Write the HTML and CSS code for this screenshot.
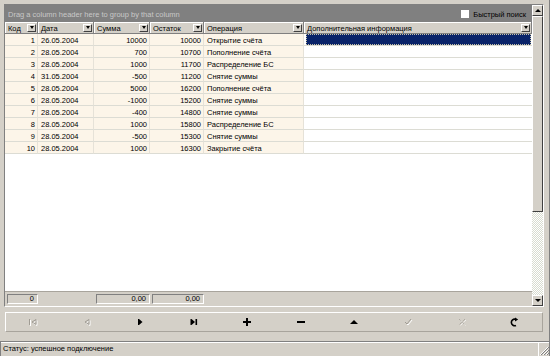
FILE: index.html
```html
<!DOCTYPE html>
<html lang="ru">
<head>
    <meta charset="utf-8">
    <title>Операции по счёту</title>
    <link rel="stylesheet" href="styles.css">
</head>
<body>
    <div class="window">
        <div class="grid-frame">
            <div class="grid-main">
                <div class="group-panel">
                    <span class="group-hint">Drag a column header here to group by that column</span>
                    <label class="quick-search"><span class="check"></span>Быстрый поиск</label>
                </div>
                <div class="grid-row grid-head">
                    <div class="hcell">Код<span class="drop"></span></div>
                    <div class="hcell">Дата<span class="drop"></span></div>
                    <div class="hcell">Сумма<span class="drop"></span></div>
                    <div class="hcell">Остаток<span class="drop"></span></div>
                    <div class="hcell">Операция<span class="drop"></span></div>
                    <div class="hcell hcell-last">Дополнительная информация<span class="drop"></span></div>
                </div>
                <div class="grid-body">
                    <div class="grid-row">
                        <div class="cell num">1</div><div class="cell">26.05.2004</div><div class="cell num">10000</div><div class="cell num">10000</div><div class="cell">Открытие счёта</div><div class="cell info"><span class="selected"></span></div>
                    </div>
                    <div class="grid-row">
                        <div class="cell num">2</div><div class="cell">28.05.2004</div><div class="cell num">700</div><div class="cell num">10700</div><div class="cell">Пополнение счёта</div><div class="cell info"></div>
                    </div>
                    <div class="grid-row">
                        <div class="cell num">3</div><div class="cell">28.05.2004</div><div class="cell num">1000</div><div class="cell num">11700</div><div class="cell">Распределение БС</div><div class="cell info"></div>
                    </div>
                    <div class="grid-row">
                        <div class="cell num">4</div><div class="cell">31.05.2004</div><div class="cell num">-500</div><div class="cell num">11200</div><div class="cell">Снятие суммы</div><div class="cell info"></div>
                    </div>
                    <div class="grid-row">
                        <div class="cell num">5</div><div class="cell">28.05.2004</div><div class="cell num">5000</div><div class="cell num">16200</div><div class="cell">Пополнение счёта</div><div class="cell info"></div>
                    </div>
                    <div class="grid-row">
                        <div class="cell num">6</div><div class="cell">28.05.2004</div><div class="cell num">-1000</div><div class="cell num">15200</div><div class="cell">Снятие суммы</div><div class="cell info"></div>
                    </div>
                    <div class="grid-row">
                        <div class="cell num">7</div><div class="cell">28.05.2004</div><div class="cell num">-400</div><div class="cell num">14800</div><div class="cell">Снятие суммы</div><div class="cell info"></div>
                    </div>
                    <div class="grid-row">
                        <div class="cell num">8</div><div class="cell">28.05.2004</div><div class="cell num">1000</div><div class="cell num">15800</div><div class="cell">Распределение БС</div><div class="cell info"></div>
                    </div>
                    <div class="grid-row">
                        <div class="cell num">9</div><div class="cell">28.05.2004</div><div class="cell num">-500</div><div class="cell num">15300</div><div class="cell">Снятие суммы</div><div class="cell info"></div>
                    </div>
                    <div class="grid-row">
                        <div class="cell num">10</div><div class="cell">28.05.2004</div><div class="cell num">1000</div><div class="cell num">16300</div><div class="cell">Закрытие счёта</div><div class="cell info"></div>
                    </div>
                </div>
                <div class="grid-row grid-footer">
                    <div class="fcell">0</div>
                    <div></div>
                    <div class="fcell">0,00</div>
                    <div class="fcell">0,00</div>
                    <div></div>
                    <div></div>
                </div>
            </div>
            <div class="vscroll">
                <div class="sbtn"><span class="arrow-up"></span></div>
                <div class="thumb"></div>
                <div class="track"></div>
                <div class="sbtn"><span class="arrow-down"></span></div>
            </div>
        </div>

        <div class="navigator">
            <div class="nav-btn">
                <svg width="10" height="10" viewBox="0 0 10 10">
                    <g transform="translate(1 1)" stroke="#fff" fill="none"><path d="M1.5 2v6"/><path d="M8 2.5v5L4 5z"/></g>
                    <g stroke="#a09c94" fill="none"><path d="M1.5 2v6"/><path d="M8 2.5v5L4 5z"/></g>
                </svg>
            </div>
            <div class="nav-btn">
                <svg width="10" height="10" viewBox="0 0 10 10">
                    <path d="M8 2.5v5L4 5z" transform="translate(1 1)" stroke="#fff" fill="none"/>
                    <path d="M8 2.5v5L4 5z" stroke="#a09c94" fill="none"/>
                </svg>
            </div>
            <div class="nav-btn">
                <svg width="10" height="10" viewBox="0 0 10 10"><path d="M3 2h1l3.5 3L4 8H3z" fill="#000"/></svg>
            </div>
            <div class="nav-btn">
                <svg width="10" height="10" viewBox="0 0 10 10"><path d="M1.5 2h1l3.5 3-3.5 3h-1z" fill="#000"/><rect x="6.5" y="2" width="1.6" height="6" fill="#000"/></svg>
            </div>
            <div class="nav-btn">
                <svg width="10" height="10" viewBox="0 0 10 10"><rect x="1" y="4" width="8" height="2" fill="#000"/><rect x="4" y="1" width="2" height="8" fill="#000"/></svg>
            </div>
            <div class="nav-btn">
                <svg width="10" height="10" viewBox="0 0 10 10"><rect x="1" y="4" width="8" height="2" fill="#000"/></svg>
            </div>
            <div class="nav-btn">
                <svg width="10" height="10" viewBox="0 0 10 10"><path d="M1 7h8L5 3z" fill="#000"/></svg>
            </div>
            <div class="nav-btn">
                <svg width="10" height="10" viewBox="0 0 10 10">
                    <path d="M2 5l2 2 4-5" transform="translate(1 1)" stroke="#fff" fill="none"/>
                    <path d="M2 5l2 2 4-5" stroke="#a09c94" fill="none"/>
                </svg>
            </div>
            <div class="nav-btn">
                <svg width="10" height="10" viewBox="0 0 10 10">
                    <path d="M2 2l6 6M8 2l-6 6" transform="translate(1 1)" stroke="#fff" stroke-dasharray="1 1" fill="none"/>
                    <path d="M2 2l6 6M8 2l-6 6" stroke="#a09c94" stroke-dasharray="1 1" fill="none"/>
                </svg>
            </div>
            <div class="nav-btn">
                <svg width="10" height="10" viewBox="0 0 10 10"><path d="M6 8.4A3.3 3.3 0 1 1 5.5 2.2" stroke="#000" stroke-width="1.6" fill="none"/><path d="M5 0.4l3.2 2-3.2 2z" fill="#000"/></svg>
            </div>
        </div>

        <div class="status">
            <div class="status-panel">Статус: успешное подключение</div>
            <svg class="grip" width="10" height="10" viewBox="0 0 10 10">
                <path d="M9 1L1 9M9 4L4 9M9 7L7 9" stroke="#fff"/>
                <path d="M10 1L2 9M10 4L5 9M10 7L8 9" stroke="#808080"/>
            </svg>
        </div>
    </div>
</body>
</html>
```

FILE: styles.css
```css
* {
    box-sizing: border-box;
}

body {
    margin: 0;
    background-color: #d4d0c8;
    font-family: "Liberation Sans", Arial, sans-serif;
    font-size: 7.5px;
    color: #000;
}

.window {
    width: 550px;
    height: 356px;
    padding-top: 4px;
    overflow: hidden;
    border-right: 1px solid #808080;
}

/* grid */
.grid-frame {
    display: flex;
    width: 540px;
    height: 303px;
    margin-left: 4px;
    border: 1px solid;
    border-color: #808080 #fff #fff #808080;
}

.grid-main {
    width: 527px;
    display: flex;
    flex-direction: column;
}

.group-panel {
    height: 17px;
    flex-shrink: 0;
    background-color: #808080;
    display: flex;
    align-items: center;
    padding: 1px 6px 0 3px;
}

.group-hint {
    flex: 1;
    color: #c8c8c8;
}

.quick-search {
    display: flex;
    align-items: center;
    gap: 4px;
    color: #000;
}

.check {
    width: 8px;
    height: 8px;
    background-color: #fff;
}

.grid-row {
    display: grid;
    grid-template-columns: 33px 56px 56px 54px 100px 1fr;
    height: 12px;
}

.grid-head {
    flex-shrink: 0;
}

.hcell {
    display: flex;
    align-items: center;
    justify-content: space-between;
    padding: 1px 1px 0 3px;
    background-color: #d4d0c8;
    border-right: 1px solid #808080;
    border-bottom: 1px solid #808080;
    box-shadow: inset 1px 1px #fff;
    white-space: nowrap;
}

.hcell .drop {
    margin-top: -1px;
}

.drop {
    width: 9px;
    height: 8px;
    display: flex;
    align-items: center;
    justify-content: center;
    border: 1px solid;
    border-color: #fff #404040 #404040 #fff;
    background-color: #d4d0c8;
}

.drop::after {
    content: "";
    border-left: 2.5px solid transparent;
    border-right: 2.5px solid transparent;
    border-top: 3px solid #000;
}

.grid-body {
    flex: 1;
    background-color: #fff;
}

.cell {
    background-color: #fcf5e9;
    border-right: 1px solid #e6e2d8;
    border-bottom: 1px solid #dcdcd4;
    line-height: 11px;
    padding: 1px 3px 0;
    white-space: nowrap;
    overflow: hidden;
}

.cell.num {
    text-align: right;
    padding-right: 2px;
}

.cell.info {
    background-color: #fff;
    border-right: none;
    padding: 0 1px 0 2px;
}

.selected {
    display: block;
    height: 11px;
    background-color: #0a246a;
    border: 1px dotted #c8c4a8;
}

.grid-footer {
    height: 15px;
    flex-shrink: 0;
    align-items: center;
    background-color: #d4d0c8;
    border-top: 1px solid #a8a49c;
}

.fcell {
    height: 10px;
    margin-left: 2px;
    border: 1px solid;
    border-color: #808080 #fff #fff #808080;
    text-align: right;
    padding-right: 3px;
    line-height: 8px;
}

/* scrollbar */
.vscroll {
    width: 11px;
    display: flex;
    flex-direction: column;
}

.sbtn {
    height: 11px;
    flex-shrink: 0;
    display: flex;
    align-items: center;
    justify-content: center;
    border: 1px solid;
    border-color: #fff #404040 #404040 #fff;
    background-color: #d4d0c8;
}

.arrow-up {
    border-left: 3px solid transparent;
    border-right: 3px solid transparent;
    border-bottom: 3px solid #000;
}

.arrow-down {
    border-left: 3px solid transparent;
    border-right: 3px solid transparent;
    border-top: 3px solid #000;
}

.thumb {
    height: 196px;
    flex-shrink: 0;
    border: 1px solid;
    border-color: #fff #404040 #404040 #fff;
    background-color: #d4d0c8;
}

.track {
    flex: 1;
    background: repeating-conic-gradient(#d8dcd0 0 25%, #fff 0 50%) 0 0 / 2px 2px;
}

/* navigator */
.navigator {
    display: grid;
    grid-template-columns: repeat(10, 1fr);
    width: 538px;
    height: 20px;
    margin: 5px 0 0 5px;
    border: 1px solid;
    border-color: #fff #a8a49c #a8a49c #fff;
}

.nav-btn {
    display: flex;
    align-items: center;
    justify-content: center;
}

/* status bar */
.status {
    display: flex;
    height: 15px;
    margin-top: 9px;
    border-top: 1px solid #808080;
    box-shadow: inset 0 1px #fff;
}

.status-panel {
    flex: 1;
    display: flex;
    align-items: center;
    padding: 0 0 1px 2px;
    border-left: 1px solid #808080;
    border-right: 1px solid #fff;
}

.grip {
    align-self: flex-end;
}
```
